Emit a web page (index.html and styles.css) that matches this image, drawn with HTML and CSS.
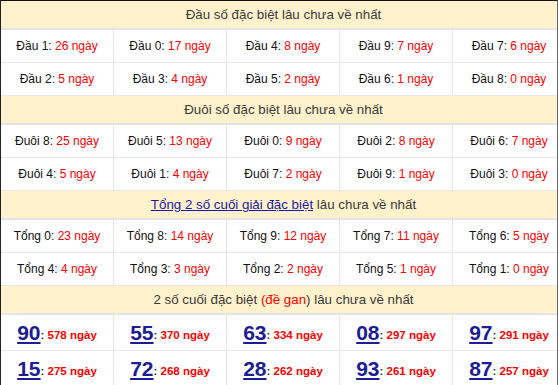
FILE: index.html
```html
<!DOCTYPE html>
<html lang="vi">
<head>
<meta charset="utf-8">
<link rel="stylesheet" href="styles.css">
</head>
<body>
<div class="frame">
  <div class="tbl">
    <div class="head">Đầu số đặc biệt lâu chưa về nhất</div>
    <div class="cell">Đầu 1: <span class="r">26 ngày</span></div>
    <div class="cell">Đầu 0: <span class="r">17 ngày</span></div>
    <div class="cell">Đầu 4: <span class="r">8 ngày</span></div>
    <div class="cell">Đầu 9: <span class="r">7 ngày</span></div>
    <div class="cell">Đầu 7: <span class="r">6 ngày</span></div>
    <div class="cell">Đầu 2: <span class="r">5 ngày</span></div>
    <div class="cell">Đầu 3: <span class="r">4 ngày</span></div>
    <div class="cell">Đầu 5: <span class="r">2 ngày</span></div>
    <div class="cell">Đầu 6: <span class="r">1 ngày</span></div>
    <div class="cell">Đầu 8: <span class="r">0 ngày</span></div>

    <div class="head">Đuôi số đặc biệt lâu chưa về nhất</div>
    <div class="cell">Đuôi 8: <span class="r">25 ngày</span></div>
    <div class="cell">Đuôi 5: <span class="r">13 ngày</span></div>
    <div class="cell">Đuôi 0: <span class="r">9 ngày</span></div>
    <div class="cell">Đuôi 2: <span class="r">8 ngày</span></div>
    <div class="cell">Đuôi 6: <span class="r">7 ngày</span></div>
    <div class="cell">Đuôi 4: <span class="r">5 ngày</span></div>
    <div class="cell">Đuôi 1: <span class="r">4 ngày</span></div>
    <div class="cell">Đuôi 7: <span class="r">2 ngày</span></div>
    <div class="cell">Đuôi 9: <span class="r">1 ngày</span></div>
    <div class="cell">Đuôi 3: <span class="r">0 ngày</span></div>

    <div class="head"><a class="lnk" href="#">Tổng 2 số cuối giải đặc biệt</a> lâu chưa về nhất</div>
    <div class="cell">Tổng 0: <span class="r">23 ngày</span></div>
    <div class="cell">Tổng 8: <span class="r">14 ngày</span></div>
    <div class="cell">Tổng 9: <span class="r">12 ngày</span></div>
    <div class="cell">Tổng 7: <span class="r">11 ngày</span></div>
    <div class="cell">Tổng 6: <span class="r">5 ngày</span></div>
    <div class="cell">Tổng 4: <span class="r">4 ngày</span></div>
    <div class="cell">Tổng 3: <span class="r">3 ngày</span></div>
    <div class="cell">Tổng 2: <span class="r">2 ngày</span></div>
    <div class="cell">Tổng 5: <span class="r">1 ngày</span></div>
    <div class="cell">Tổng 1: <span class="r">0 ngày</span></div>

    <div class="head">2 số cuối đặc biệt <span class="r">(đề gan</span>) lâu chưa về nhất</div>
    <div class="cell big"><a class="num" href="#">90</a><span class="sm">: <span class="r">578 ngày</span></span></div>
    <div class="cell big"><a class="num" href="#">55</a><span class="sm">: <span class="r">370 ngày</span></span></div>
    <div class="cell big"><a class="num" href="#">63</a><span class="sm">: <span class="r">334 ngày</span></span></div>
    <div class="cell big"><a class="num" href="#">08</a><span class="sm">: <span class="r">297 ngày</span></span></div>
    <div class="cell big"><a class="num" href="#">97</a><span class="sm">: <span class="r">291 ngày</span></span></div>
    <div class="cell big"><a class="num" href="#">15</a><span class="sm">: <span class="r">275 ngày</span></span></div>
    <div class="cell big"><a class="num" href="#">72</a><span class="sm">: <span class="r">268 ngày</span></span></div>
    <div class="cell big"><a class="num" href="#">28</a><span class="sm">: <span class="r">262 ngày</span></span></div>
    <div class="cell big"><a class="num" href="#">93</a><span class="sm">: <span class="r">261 ngày</span></span></div>
    <div class="cell big"><a class="num" href="#">87</a><span class="sm">: <span class="r">257 ngày</span></span></div>
  </div>
</div>
</body>
</html>
```

FILE: styles.css
```css
html, body {
  margin: 0;
  padding: 0;
  background: #ffffff;
}
body {
  width: 559px;
  height: 385px;
  overflow: hidden;
  font-family: "Liberation Sans", Arial, sans-serif;
}
.frame {
  width: 556px;
  border-top: 1px solid #111111;
  border-left: 1px solid #222222;
  border-right: 1px solid #6a6a6a;
  overflow: hidden;
}
.tbl {
  display: grid;
  grid-template-columns: 113px 113px 113px 113px 113px;
  width: 565px;
}
.head {
  grid-column: 1 / -1;
  height: 27px;
  border-bottom: 2px solid #e4e4e8;
  background: #fff2cc;
  color: #3a3a3a;
  font-size: 13.33px;
  display: flex;
  align-items: center;
  justify-content: center;
  white-space: pre;
}
.cell {
  height: 32px;
  border-bottom: 1px solid #e8e8e8;
  border-right: 1px solid #e6e6e6;
  display: flex;
  align-items: center;
  justify-content: center;
  font-size: 12px;
  color: #111111;
  white-space: pre;
}
.cell.big {
  height: 35px;
}
.r {
  color: #ff0000;
}
.sm {
  font-weight: bold;
  font-size: 11.5px;
  margin-top: 4px;
  color: #333333;
}
.lnk {
  color: #1a1aa6;
  text-decoration: underline;
}
.num {
  color: #1c1c94;
  font-size: 21px;
  font-weight: bold;
  text-decoration: underline;
}
```
